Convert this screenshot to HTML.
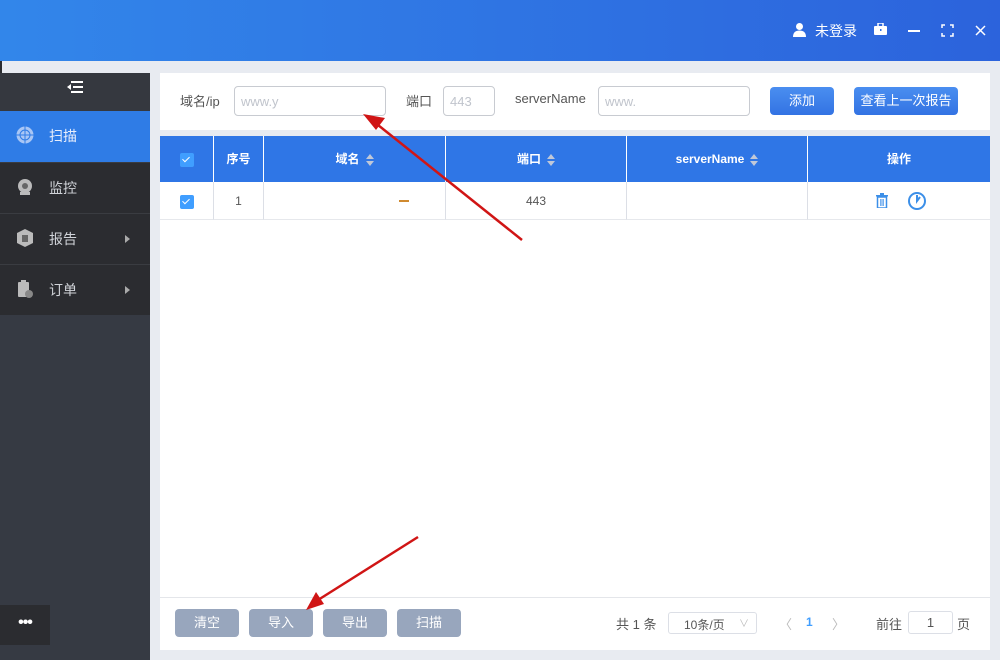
<!DOCTYPE html>
<html><head><meta charset="utf-8"><style>
*{margin:0;padding:0;box-sizing:border-box}
body{width:1000px;height:660px;overflow:hidden;background:#e8ebf1;font-family:"Liberation Sans","Noto Sans CJK SC",sans-serif;font-size:13px;position:relative;color:#606266}
.top{position:absolute;left:0;top:0;width:1000px;height:61px;background:linear-gradient(90deg,#3286ea,#2c63dc)}
.abs{position:absolute}
.side{position:absolute;left:0;top:73px;width:150px;height:587px;background:#363a43}
.sh{height:38px;background:#35383f;position:relative}
.it{height:51px;background:#2b2c30;color:#d0d3d8;font-size:14px;position:relative;border-top:1px solid #3a3c41}
.it span{position:absolute;left:49px;top:15px}
.it.act{background:#2f7ce6;color:#e8eefc;border-top:none;height:51px}
.it .ar{position:absolute;left:125px;top:21px;width:0;height:0;border-left:5px solid #aaa;border-top:4px solid transparent;border-bottom:4px solid transparent}
.it svg{position:absolute;left:16px;top:15px}
.card{position:absolute;left:160px;top:73px;width:830px;height:57px;background:#fff}
.inp{position:absolute;border:1px solid #c8cbd1;border-radius:4px;height:30px;background:#fff;color:#c0c4cc;font-size:13px;padding:7px 6px}
.btn{position:absolute;height:28px;border-radius:4px;background:linear-gradient(#4a8ef0,#3373e3);color:#fff;text-align:center;line-height:28px;font-size:13px}
.tbl{position:absolute;left:160px;top:136px;width:830px;height:514px;background:#fff}
.th{position:absolute;top:0;height:46px;background:#2f76e6;color:#fff;font-weight:bold;font-size:12px;text-align:center;line-height:46px;border-right:1px solid #fff}
.td{position:absolute;top:46px;height:38px;border-right:1px solid #dcdfe6;border-bottom:1px solid #e6e8ec;text-align:center;line-height:38px;color:#555;font-size:12px}
.cb{display:inline-block;width:14px;height:14px;background:#409eff;border-radius:2px;vertical-align:middle;position:relative}
.cb:after{content:"";position:absolute;left:4px;top:2px;width:3px;height:6px;border:solid #fff;border-width:0 1.5px 1.5px 0;transform:rotate(45deg)}
.sort{display:inline-block;vertical-align:middle;margin-left:6px;width:8px;height:12px;position:relative}
.sort:before{content:"";position:absolute;top:0;left:0;border-bottom:5px solid #c0c8d8;border-left:4.5px solid transparent;border-right:4.5px solid transparent}
.sort:after{content:"";position:absolute;bottom:0;left:0;border-top:5px solid #c0c8d8;border-left:4.5px solid transparent;border-right:4.5px solid transparent}
.gb{position:absolute;top:609px;height:28px;width:64px;border-radius:4px;background:#98a6bd;color:#fff;text-align:center;line-height:28px;font-size:13px}
</style></head><body>
<div class="top"></div>
<div class="abs" style="left:0;top:61px;width:2px;height:12px;background:#2b2c30"></div>
<svg class="abs" style="left:792px;top:22px" width="15" height="15" viewBox="0 0 15 15"><circle cx="7.5" cy="4.5" r="3.5" fill="#fff"/><path d="M1 15c0-5 3-6.5 6.5-6.5S14 10 14 15z" fill="#fff"/></svg>
<div class="abs" style="left:815px;top:21px;color:#fff;font-size:14px">未登录</div>
<svg class="abs" style="left:874px;top:23px" width="13" height="12"><rect x="0" y="3" width="13" height="9" rx="1" fill="#fff"/><rect x="4" y="0" width="5" height="4" fill="none" stroke="#fff" stroke-width="1.5"/><rect x="6" y="6" width="1.5" height="2" fill="#3070e4"/></svg>
<div class="abs" style="left:908px;top:30px;width:12px;height:1.5px;background:#fff"></div>
<svg class="abs" style="left:941px;top:24px" width="13" height="13" fill="none" stroke="#fff" stroke-width="1.5"><path d="M1 4V1h3M9 1h3v3M12 9v3H9M4 12H1V9"/></svg>
<svg class="abs" style="left:975px;top:25px" width="11" height="11" stroke="#fff" stroke-width="1.5"><path d="M1 1l9 9M10 1l-9 9"/></svg>
<div class="side">
 <div class="sh"><svg class="abs" style="left:67px;top:8px" width="16" height="12" fill="#fff"><rect x="4" y="0" width="12" height="2"/><rect x="6" y="5" width="10" height="2"/><rect x="4" y="10" width="12" height="2"/><path d="M0 6l4-3v6z"/></svg></div>
 <div class="it act"><svg width="18" height="18"><circle cx="9" cy="9" r="8.5" fill="#a9c6f5"/><circle cx="9" cy="9" r="5" fill="none" stroke="#2f7ce6" stroke-width="1"/><path d="M0 9h18M9 0v18" stroke="#2f7ce6" stroke-width="1"/></svg><span>扫描</span></div>
 <div class="it"><svg width="18" height="18"><circle cx="9" cy="8" r="7" fill="#bbb"/><circle cx="9" cy="8" r="3" fill="#666"/><rect x="4" y="14" width="10" height="3" fill="#bbb"/></svg><span>监控</span></div>
 <div class="it"><svg width="18" height="18"><path d="M9 0l8 4v10l-8 4-8-4V4z" fill="#bbb"/><rect x="6" y="6" width="6" height="7" fill="#666"/></svg><span>报告</span><i class="ar"></i></div>
 <div class="it"><svg width="18" height="18"><rect x="2" y="2" width="11" height="15" rx="1" fill="#bbb"/><rect x="5" y="0" width="5" height="3" fill="#bbb"/><circle cx="13" cy="14" r="4" fill="#888"/></svg><span>订单</span><i class="ar"></i></div>
</div>
<div class="abs" style="left:0;top:605px;width:50px;height:40px;background:#2b2c30;color:#fff;text-align:center;font-size:16px;line-height:36px;font-weight:bold;letter-spacing:-1px">•••</div>
<div class="card">
 <div class="abs" style="left:20px;top:18px;color:#555">域名/ip</div>
 <div class="inp" style="left:74px;top:13px;width:152px">www.y</div>
 <div class="abs" style="left:246px;top:18px;color:#555">端口</div>
 <div class="inp" style="left:283px;top:13px;width:52px">443</div>
 <div class="abs" style="left:355px;top:18px;color:#555">serverName</div>
 <div class="inp" style="left:438px;top:13px;width:152px">www.</div>
 <div class="btn" style="left:610px;top:14px;width:64px">添加</div>
 <div class="btn" style="left:694px;top:14px;width:104px">查看上一次报告</div>
</div>
<div class="tbl">
 <div class="th" style="left:0;width:54px"><span class="cb"></span></div>
 <div class="th" style="left:54px;width:50px">序号</div>
 <div class="th" style="left:104px;width:182px">域名<i class="sort"></i></div>
 <div class="th" style="left:286px;width:181px">端口<i class="sort"></i></div>
 <div class="th" style="left:467px;width:181px">serverName<i class="sort"></i></div>
 <div class="th" style="left:648px;width:182px;border-right:none">操作</div>
 <div class="td" style="left:0;width:54px"><span class="cb"></span></div>
 <div class="td" style="left:54px;width:50px">1</div>
 <div class="td" style="left:104px;width:182px"><span style="position:absolute;left:135px;top:18px;width:10px;height:2px;background:#d08a30"></span></div>
 <div class="td" style="left:286px;width:181px">443</div>
 <div class="td" style="left:467px;width:181px"></div>
 <div class="td" style="left:648px;width:182px;border-right:none">
  <svg class="abs" style="left:68px;top:11px" width="12" height="15" fill="#3c8fe8"><rect x="0" y="2" width="12" height="1.5"/><rect x="4" y="0" width="4" height="2"/><path d="M1.5 4h9v11h-9z" fill="none" stroke="#3c8fe8" stroke-width="1.5"/><rect x="4.3" y="6" width="1.2" height="7"/><rect x="6.5" y="6" width="1.2" height="7"/></svg>
  <svg class="abs" style="left:99px;top:9px" width="20" height="20" fill="none" stroke="#3c8fe8" stroke-width="2"><circle cx="10" cy="10" r="8"/><path d="M10 4v6l3-4" /></svg>
 </div>
 <div class="abs" style="left:0;top:461px;width:830px;height:1px;background:#e4e6ea"></div>
</div>
<div class="gb" style="left:175px">清空</div>
<div class="gb" style="left:249px">导入</div>
<div class="gb" style="left:323px">导出</div>
<div class="gb" style="left:397px">扫描</div>
<div class="abs" style="left:616px;top:614px;color:#555">共 1 条</div>
<div class="abs" style="left:668px;top:612px;width:89px;height:22px;border:1px solid #dcdfe6;border-radius:3px;font-size:12px;padding:3px 15px;color:#555">10条/页<span style="position:absolute;right:7px;top:2px;color:#bbb;font-size:10px">∨</span></div>
<div class="abs" style="left:779px;top:614px;color:#bbb">〈</div>
<div class="abs" style="left:806px;top:615px;color:#409eff;font-weight:bold;font-size:12px">1</div>
<div class="abs" style="left:832px;top:614px;color:#bbb">〉</div>
<div class="abs" style="left:876px;top:614px;color:#555">前往</div>
<div class="abs" style="left:908px;top:611px;width:45px;height:23px;border:1px solid #dcdfe6;border-radius:3px;text-align:center;line-height:21px;color:#555">1</div>
<div class="abs" style="left:957px;top:614px;color:#555">页</div>
<svg class="abs" style="left:0;top:0" width="1000" height="660">
 <g stroke="#d01515" stroke-width="2.5">
  <line x1="522" y1="240" x2="378" y2="125"/>
  <line x1="418" y1="537" x2="318" y2="600"/>
 </g>
 <path d="M363 114l22 4-9 12z" fill="#d01515"/>
 <path d="M306 610l10-18 8 12z" fill="#d01515"/>
</svg>
</body></html>
